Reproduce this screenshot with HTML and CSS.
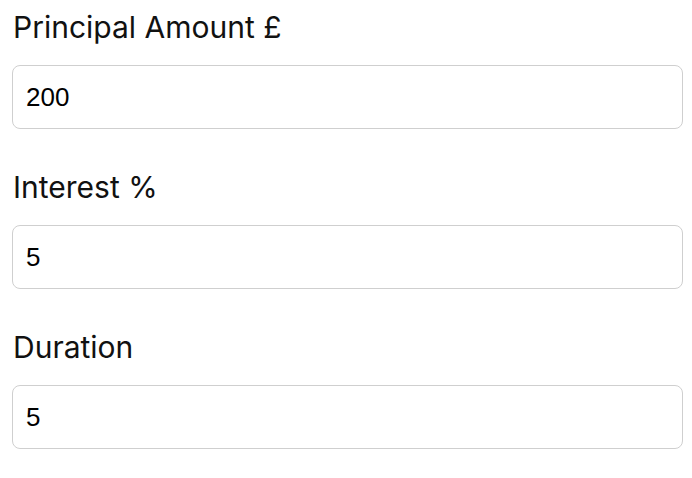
FILE: index.html
```html
<!DOCTYPE html>
<html>
<head>
<meta charset="utf-8">
<link rel="stylesheet" href="styles.css">
</head>
<body>
<form class="form">
  <div class="field">
    <label class="label">Principal Amount £</label>
    <input class="input" type="text" value="200">
  </div>
  <div class="field">
    <label class="label">Interest %</label>
    <input class="input" type="text" value="5">
  </div>
  <div class="field">
    <label class="label">Duration</label>
    <input class="input" type="text" value="5">
  </div>
</form>
</body>
</html>
```
FILE: styles.css
```css
html, body {
  margin: 0;
  padding: 0;
  background: #fff;
}
.form {
  display: flex;
  flex-direction: column;
  padding: 11px 9px 0 12px;
  gap: 42px;
}
.field {
  display: flex;
  flex-direction: column;
  gap: 21px;
}
.label {
  font-family: Inter, "Noto Sans", sans-serif;
  font-size: 30px;
  line-height: 33px;
  color: #111;
  padding-left: 1px;
}
.input {
  box-sizing: border-box;
  height: 64px;
  width: 671px;
  border: 1px solid #cfcfcf;
  border-radius: 8px;
  padding: 0 13px;
  font-family: "Liberation Sans", Arial, sans-serif;
  font-size: 26px;
  color: #000;
  background: #fff;
  outline: none;
}
```
